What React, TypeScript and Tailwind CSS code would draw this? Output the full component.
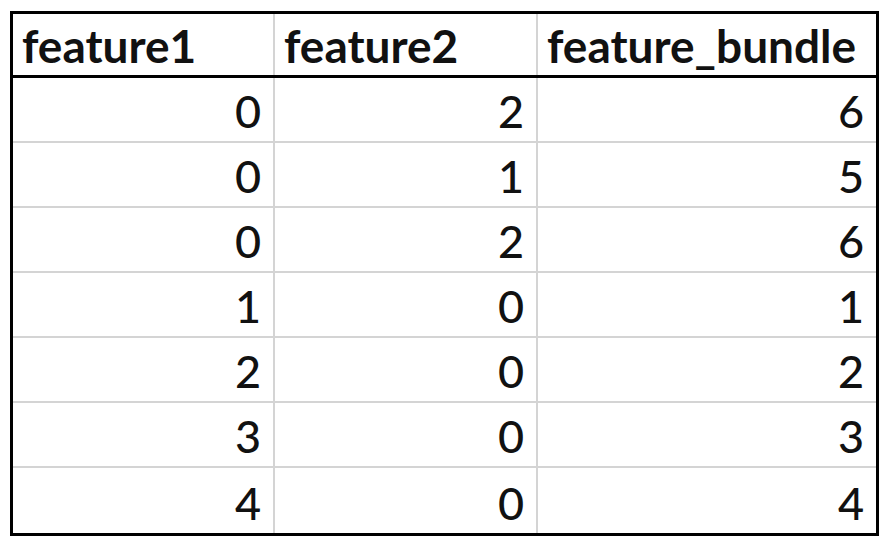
const rows = [
  [0, 2, 6],
  [0, 1, 5],
  [0, 2, 6],
  [1, 0, 1],
  [2, 0, 2],
  [3, 0, 3],
  [4, 0, 4],
];

const headers = ["feature1", "feature2", "feature_bundle"];

export default function App() {
  return (
    <div className="w-[884px] h-[544px] bg-white pt-[11px] pl-[10px] text-[#111] font-['Lato','Open_Sans',sans-serif]">
      <div className="w-[869px] border-[3px] border-black">
        {/* HEADER */}
        <div className="grid grid-cols-[262px_263px_1fr] h-[64px] border-b-[3px] border-black">
          {headers.map((h, i) => (
            <div
              key={h}
              className={`flex items-end pb-[6px] pl-[9px] text-[46px] font-bold leading-none ${
                i < 2 ? "border-r-2 border-[#d4d4d4]" : ""
              }`}
            >
              {h}
            </div>
          ))}
        </div>
        {/* ROWS */}
        {rows.map((r, ri) => (
          <div
            key={ri}
            className={`grid grid-cols-[262px_263px_1fr] h-[65px] ${
              ri < rows.length - 1 ? "border-b-2 border-[#d4d4d4]" : ""
            }`}
          >
            {r.map((v, ci) => (
              <div
                key={ci}
                className={`flex items-end justify-end pb-[7px] pr-[12px] text-[45px] font-medium leading-none ${
                  ci < 2 ? "border-r-2 border-[#d4d4d4]" : ""
                }`}
              >
                {v}
              </div>
            ))}
          </div>
        ))}
      </div>
    </div>
  );
}
